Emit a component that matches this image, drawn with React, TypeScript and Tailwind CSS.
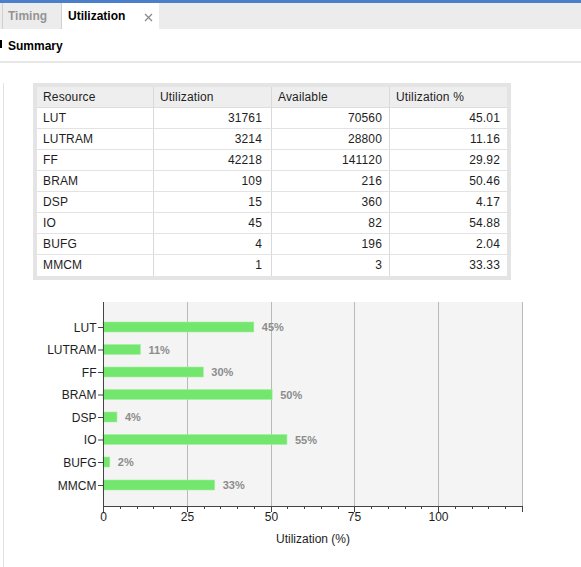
import React from "react";

type Row = { name: string; used: number; avail: number; pct: string };

const rows: Row[] = [
  { name: "LUT", used: 31761, avail: 70560, pct: "45.01" },
  { name: "LUTRAM", used: 3214, avail: 28800, pct: "11.16" },
  { name: "FF", used: 42218, avail: 141120, pct: "29.92" },
  { name: "BRAM", used: 109, avail: 216, pct: "50.46" },
  { name: "DSP", used: 15, avail: 360, pct: "4.17" },
  { name: "IO", used: 45, avail: 82, pct: "54.88" },
  { name: "BUFG", used: 4, avail: 196, pct: "2.04" },
  { name: "MMCM", used: 1, avail: 3, pct: "33.33" },
];

// chart geometry, in page pixels
const X0 = 103;
const PX = 3.352; // px per percent, axis runs 0..125
const TOP = 301;
const BOTTOM = 505;
const centers = [326, 348.5, 371, 393.5, 416, 438.5, 461, 484];

function UtilChart() {
  const ticks: number[] = [];
  for (let v = 0; v <= 125; v += 5) ticks.push(v);

  return (
    <svg
      width={577}
      height={288}
      viewBox="4 279 577 288"
      className="block"
      style={{ fontFamily: '"Liberation Sans", Arial, sans-serif' }}
    >
      <rect x={X0} y={TOP} width={125 * PX} height={BOTTOM - TOP} fill="#f4f4f4" />
      {[25, 50, 75, 100, 125].map((v) => (
        <line
          key={v}
          x1={Math.round(X0 + v * PX) + 0.5}
          x2={Math.round(X0 + v * PX) + 0.5}
          y1={TOP}
          y2={BOTTOM}
          stroke="#b9b9b9"
        />
      ))}

      {rows.map((r, i) => {
        const c = centers[i];
        const w = parseFloat(r.pct) * PX;
        return (
          <g key={r.name}>
            <rect x={X0} y={c - 5} width={w} height={10} fill="#73e76d" stroke="#a6efa2" strokeWidth={0.6} />
            <line x1={98} x2={X0} y1={c + 0.5} y2={c + 0.5} stroke="#444" />
            <text x={96.5} y={c + 4.5} textAnchor="end" fontSize={12} fill="#1e1e1e">
              {r.name}
            </text>
            <text x={X0 + w + 8} y={c + 4} fontSize={11} fontWeight={700} fill="#8c8c8c">
              {Math.round(parseFloat(r.pct))}%
            </text>
          </g>
        );
      })}

      <line x1={X0 + 0.5} x2={X0 + 0.5} y1={TOP} y2={BOTTOM + 1} stroke="#444" />
      <line x1={X0} x2={X0 + 125 * PX + 1} y1={BOTTOM + 0.5} y2={BOTTOM + 0.5} stroke="#444" />
      {ticks.map((v) => {
        const x = Math.round(X0 + v * PX) + 0.5;
        const major = v % 25 === 0;
        return (
          <g key={v}>
            <line x1={x} x2={x} y1={BOTTOM} y2={BOTTOM + (major ? 6 : 3)} stroke="#444" />
            {major && v < 125 && (
              <text x={x} y={520} textAnchor="middle" fontSize={12} fill="#1e1e1e">
                {v}
              </text>
            )}
          </g>
        );
      })}
      <text x={313} y={542} textAnchor="middle" fontSize={12} fill="#1e1e1e">
        Utilization (%)
      </text>
    </svg>
  );
}

export default function App() {
  const cols = "grid-cols-[117px_118px_118px_116px]";
  return (
    <div
      className="relative h-[567px] w-[581px] overflow-hidden bg-white text-[12px] text-[#1e1e1e]"
      style={{ fontFamily: '"Liberation Sans", Arial, sans-serif' }}
    >
      {/* top accent */}
      <div className="h-[3px] bg-[#4b7ecb]" />

      {/* tabs */}
      <div className="flex h-[26px] bg-[#ececec]">
        <div className="ml-[2px] flex w-[60px] items-center border-x border-[#cfcfcf] pl-[5px] font-bold text-[#949494]">
          Timing
        </div>
        <div className="flex w-[97px] items-center bg-white pl-[6px] font-bold text-black">
          Utilization
          <svg width="9" height="9" viewBox="0 0 9 9" className="ml-[19px] mt-[2px]">
            <path d="M1 1 L8 8 M8 1 L1 8" stroke="#8a8a8a" strokeWidth="1.3" />
          </svg>
        </div>
      </div>

      {/* section header */}
      <div className="relative flex h-[32px] items-center pl-[8px] font-bold text-black">
        <span className="absolute left-0 top-[11px] h-[8px] w-[2px] bg-black" />
        <span className="pt-[1px]">Summary</span>
      </div>
      <div className="h-[2px] bg-[#e6e6e6]" />

      {/* content */}
      <div className="ml-[3px] h-[503px] border-l border-[#e2e2e2]">
        <div className="ml-[29px] mt-[20px] w-[478px] bg-[#e4e4e4] p-[4px] pr-[4px]">
          <div className="bg-white tracking-[0.15px]">
            <div className={`grid ${cols} h-[21px] items-center border-b border-[#dedede] bg-[#eeeeee]`}>
              <div className="h-full border-r border-[#d9d9d9] pl-[6px] leading-[21px]">Resource</div>
              <div className="h-full border-r border-[#d9d9d9] pl-[6px] leading-[21px]">Utilization</div>
              <div className="h-full border-r border-[#d9d9d9] pl-[6px] leading-[21px]">Available</div>
              <div className="h-full pl-[6px] leading-[21px]">Utilization %</div>
            </div>
            {rows.map((r, i) => (
              <div
                key={r.name}
                className={`grid ${cols} h-[21px] ${i < rows.length - 1 ? "border-b border-[#e3e3e3]" : ""}`}
              >
                <div className="h-full border-r border-[#d9d9d9] pl-[6px] leading-[20px]">{r.name}</div>
                <div className="h-full border-r border-[#d9d9d9] pr-[9px] text-right leading-[20px]">{r.used}</div>
                <div className="h-full border-r border-[#d9d9d9] pr-[7px] text-right leading-[20px]">{r.avail}</div>
                <div className="h-full pr-[6px] text-right leading-[20px]">{r.pct}</div>
              </div>
            ))}
          </div>
        </div>
        <UtilChart />
      </div>
    </div>
  );
}
